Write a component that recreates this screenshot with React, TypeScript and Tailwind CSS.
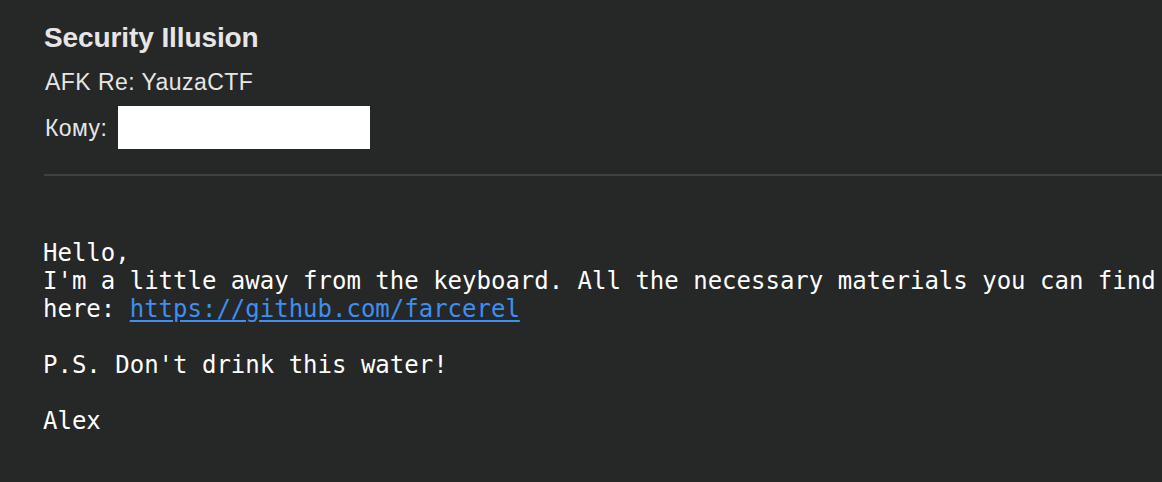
export default function App() {
  return (
    <div className="w-[1162px] h-[482px] bg-[#262727] overflow-hidden">
      <div className="pl-[44px]">
        <div
          className="pt-[21px] text-[28px] leading-[34px] font-bold text-[#e6e6e6] tracking-[-0.1px]"
          style={{ fontFamily: '"Liberation Sans", Arial, sans-serif' }}
        >
          Security Illusion
        </div>
        <div
          className="mt-[13px] pl-[1px] text-[23px] leading-[28px] text-[#e6e6e6] tracking-[0.45px]"
          style={{ fontFamily: '"Liberation Sans", Arial, sans-serif' }}
        >
          AFK Re: YauzaCTF
        </div>
        <div
          className="mt-[10px] pl-[1px] flex items-center gap-[11px] h-[43px] text-[23px] leading-[28px] text-[#e6e6e6] tracking-[0.45px]"
          style={{ fontFamily: '"Liberation Sans", Arial, sans-serif' }}
        >
          <span>Кому:</span>
          <div className="w-[252px] h-[43px] bg-white" />
        </div>
        <div className="mt-[25px] h-[2px] bg-[#3f4040]" />
      </div>
      <div
        className="pl-[43px] pt-[63px] text-[24px] leading-[28px] text-white whitespace-pre"
        style={{ fontFamily: '"DejaVu Sans Mono", Menlo, monospace' }}
      >
        <div>Hello,</div>
        <div>I'm a little away from the keyboard. All the necessary materials you can find</div>
        <div>
          here:{" "}
          <a href="#" className="text-[#3d8ff2] underline underline-offset-[3px]">
            https://github.com/farcerel
          </a>
        </div>
        <div>&nbsp;</div>
        <div>P.S. Don't drink this water!</div>
        <div>&nbsp;</div>
        <div>Alex</div>
      </div>
    </div>
  );
}
